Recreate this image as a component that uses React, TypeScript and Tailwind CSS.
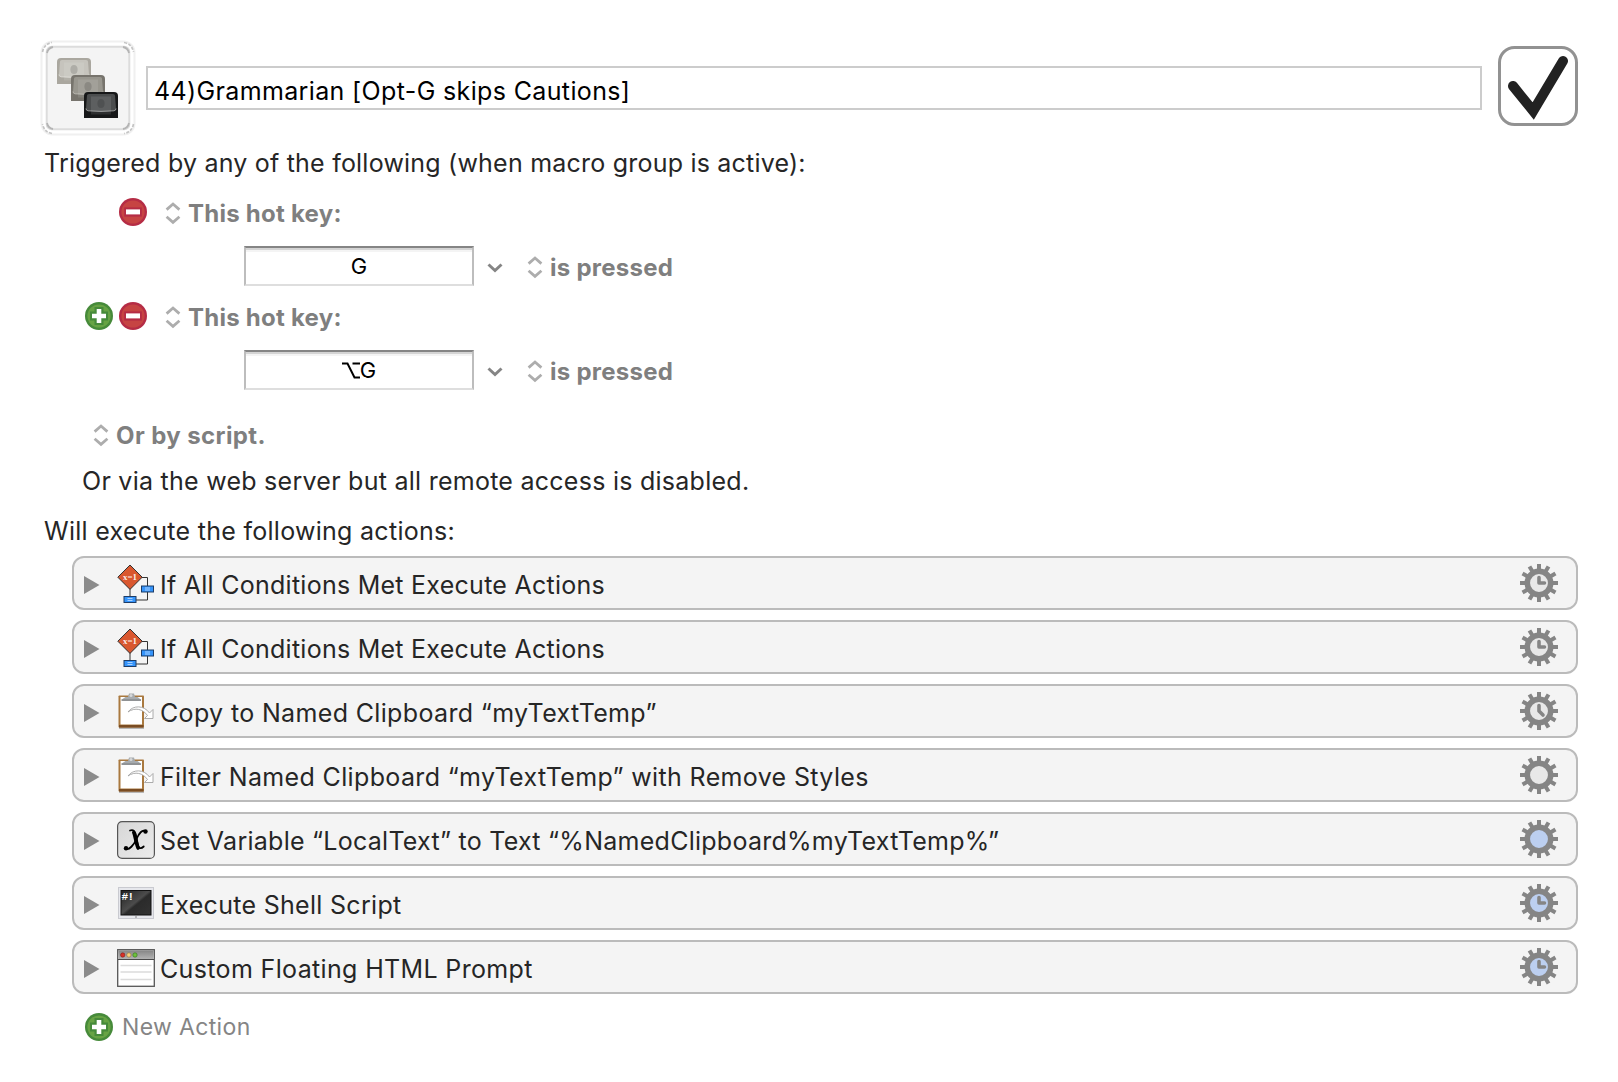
import React from "react";

const teeth = [0, 30, 60, 90, 120, 150, 180, 210, 240, 270, 300, 330];

function Stepper() {
  return (
    <svg width="16" height="24" viewBox="0 0 16 24" className="shrink-0" fill="none" stroke="#adadad" strokeWidth="2.800">
      <path d="M1.600 8.600 8 3l6.400 5.600" />
      <path d="M1.600 15.800 8 21.400l6.400-5.600" />
    </svg>
  );
}

function MinusButton() {
  return (
    <svg width="28" height="28" viewBox="0 0 28 28" className="shrink-0">
      <circle cx="14" cy="14" r="14" fill="#b52c45" />
      <circle cx="14" cy="14" r="11.600" fill="#c64443" />
      <rect x="5.200" y="9.400" width="17.600" height="9.200" fill="#b52c45" />
      <rect x="7" y="11.400" width="14" height="5" fill="#fff" />
    </svg>
  );
}

function PlusButton() {
  return (
    <svg width="28" height="28" viewBox="0 0 28 28" className="shrink-0">
      <circle cx="14" cy="14" r="14" fill="#468a3a" />
      <circle cx="14" cy="14" r="11.600" fill="#67a344" />
      <path d="M9.500 5h9v4.500h4.500v9h-4.500V23h-9v-4.500H5v-9h4.500z" fill="#468a3a" />
      <path d="M11.700 7h4.600v4.700H21v4.600h-4.700V21h-4.600v-4.700H7v-4.600h4.700z" fill="#fff" />
    </svg>
  );
}

function Gear({ fill, hand }: { fill: string; hand?: string }) {
  return (
    <svg width="38" height="38" viewBox="0 0 38 38" className="shrink-0">
      {teeth.map((a) => (
        <rect key={a} x="17" y="0" width="4" height="7" fill="#858585" transform={`rotate(${a} 19 19)`} />
      ))}
      <circle cx="19" cy="19" r="11.700" fill={fill} stroke="#858585" strokeWidth="5.500" />
      {hand && <path d={hand} fill="none" stroke="#858585" strokeWidth="3.600" strokeLinejoin="round" strokeLinecap="round" />}
    </svg>
  );
}

function ConditionIcon() {
  return (
    <svg width="38" height="40" viewBox="0 0 38 40">
      <path d="M13 24v9M24 13.500h6.500V36H18" fill="none" stroke="#333" strokeWidth="1" />
      <path d="M13 1 25.200 13.200 13 25.400.8 13.200z" fill="#d9572f" stroke="#333" strokeWidth="1" />
      <text x="13" y="16" textAnchor="middle" fontSize="9" fontWeight="700" fill="#fff" fillOpacity=".9" fontFamily="Liberation Serif, serif" textLength="14" lengthAdjust="spacingAndGlyphs">x=1</text>
      <rect x="24.500" y="22" width="12" height="6" fill="#3594fb" stroke="#1d3c66" />
      <path d="M28 24h5M28 26h5" stroke="#b5d8ff" strokeWidth=".9" />
      <rect x="7" y="32.500" width="12" height="6" fill="#3594fb" stroke="#1d3c66" />
      <path d="M10.500 34.500h5M10.500 36.500h5" stroke="#b5d8ff" strokeWidth=".9" />
    </svg>
  );
}

function ClipboardIcon() {
  return (
    <svg width="38" height="40" viewBox="0 0 38 40">
      <rect x="2" y="34.500" width="25" height="2.500" fill="#000" opacity=".25" />
      <rect x="1.500" y="3.500" width="25.500" height="32" rx=".8" fill="#a9793f" />
      <rect x="2" y="33" width="24.500" height="2.500" fill="#7a4c22" />
      <rect x="3.500" y="5" width="21.500" height="27.500" fill="#fff" />
      <path d="M4 8 8.500 5H11l1-3.500h5L18 5h2.500L24.500 8z" fill="#a7abae" />
      <circle cx="14" cy="3.500" r="1.500" fill="#d6d8da" />
      <path d="M4.500 8.200h19.500" stroke="#5f6265" strokeWidth="1" />
      <path d="M11 20c5-7 16-7 21.500 1l3.500-3.500V26.500h-8.500l3-3C26 17 18 15 11 20z" fill="#fff" stroke="#a3a3a3" strokeWidth=".9" strokeLinejoin="round" />
    </svg>
  );
}

function VariableIcon() {
  return (
    <svg width="38" height="40" viewBox="0 0 38 40">
      <defs>
        <linearGradient id="variable-key" x1="0" y1="0" x2="1" y2="1">
          <stop offset="0" stopColor="#d6d6d6" />
          <stop offset="1" stopColor="#ececec" />
        </linearGradient>
      </defs>
      <rect x=".6" y="1.600" width="36.800" height="36.800" rx="4.500" fill="url(#variable-key)" stroke="#555" strokeWidth="1.200" />
      <g fill="none" stroke="#000" strokeLinecap="round">
        <path d="M13 10.500c3.500-1.500 5.300 1 6.200 6l1.500 7.500c.8 4.500 3 5.500 6 2.500" strokeWidth="1.800" />
        <path d="M16.800 12.500c1.200 2 2.500 12 4.300 15.500" strokeWidth="3.600" />
        <path d="M29 11.500c-4-2.500-7 2-9.500 7.500S12 31 8.500 28.500" strokeWidth="1.800" />
      </g>
      <circle cx="28.500" cy="11.500" r="2.200" />
      <circle cx="9" cy="28.300" r="2.200" />
    </svg>
  );
}

function ShellIcon() {
  return (
    <svg width="38" height="40" viewBox="0 0 38 40">
      <defs>
        <linearGradient id="shell-screen" x1="0" y1="0" x2="1" y2="1">
          <stop offset="0" stopColor="#222" />
          <stop offset=".48" stopColor="#4c4c4c" />
          <stop offset=".55" stopColor="#2b2b2b" />
          <stop offset="1" stopColor="#333" />
        </linearGradient>
      </defs>
      <rect x="1.500" y="3.500" width="35" height="31" fill="#e6e7ec" stroke="#c9cad0" />
      <rect x="4" y="6.500" width="30" height="24.500" fill="url(#shell-screen)" stroke="#111" />
      <text x="4.500" y="15.500" fontSize="11" fontWeight="700" fill="#fff" fontFamily="Liberation Mono, monospace" textLength="12.500">#!</text>
      <circle cx="19" cy="33" r=".8" fill="#777" />
    </svg>
  );
}

function WindowIcon() {
  return (
    <svg width="38" height="40" viewBox="0 0 38 40">
      <defs>
        <linearGradient id="window-bar" x1="0" y1="0" x2="0" y2="1">
          <stop offset="0" stopColor="#858585" />
          <stop offset="1" stopColor="#b4b4b4" />
        </linearGradient>
      </defs>
      <rect x=".7" y="1.700" width="36.600" height="36.600" fill="#fff" stroke="#555" strokeWidth="1.300" />
      <rect x="1.300" y="2.300" width="35.400" height="9" fill="url(#window-bar)" />
      <path d="M1 11.500h36" stroke="#4a4a4a" />
      <path d="M3.500 17.500h31M3.500 24h31M3.500 31.500h31" stroke="#dcdcdc" strokeWidth="1.500" />
      <circle cx="5.700" cy="7" r="2.200" fill="#d92f26" stroke="#7d201b" strokeWidth=".6" />
      <circle cx="11.900" cy="7" r="2.200" fill="#f7cf7c" stroke="#8b703b" strokeWidth=".6" />
      <circle cx="18" cy="7" r="2.200" fill="#6cc03c" stroke="#38701c" strokeWidth=".6" />
    </svg>
  );
}

function Keycap({ x, y, side, face, lip }: { x: number; y: number; side: string; face: string; lip: string }) {
  return (
    <g transform={`translate(${x} ${y})`}>
      <path d="M0 25.500V4Q0 0 4 0h26q4 0 4 4v21.500q0 .5-.5.500H.5q-.5 0-.5-.5z" fill={side} />
      <path d="M3 3.500Q3 2 5 2h24q2 0 2 1.500l1 13q0 2-2 2.300-13 1.200-26 0-2-.3-2-2.300z" fill={face} />
      <path d="M2 16.500q0 2 2 2.300 13 1.200 26 0 2-.3 2-2.300" fill="none" stroke={lip} strokeWidth=".9" />
      <path d="M7 4.500h20v18H7z" fill="#fff" opacity=".1" />
      <ellipse cx="17" cy="11.500" rx="3.600" ry="4.500" fill="#000" opacity=".14" />
    </g>
  );
}

function MacroIcon() {
  return (
    <svg width="96" height="96" viewBox="0 0 96 96" className="shrink-0">
      <rect x="1.500" y="1.500" width="93" height="93" rx="11" fill="#fff" stroke="#f0f0f0" strokeWidth="2" />
      <path d="M2.500 12Q4 4 12 2.500M84 2.500q8 1.500 9.500 9.500M93.500 84q-1.500 8-9.500 9.500M12 93.500Q4 92 2.500 84" fill="none" stroke="#c4c4c4" strokeWidth="1.700" strokeDasharray="3 1.500" />
      <rect x="6.700" y="6.700" width="82.600" height="82.600" rx="5" fill="#f4f4f4" stroke="#dcdcdc" strokeWidth="2" />
      <path d="M7 13q1-5 6-6M83 7q5 1 6 6M89 83q-1 5-6 6M13 89q-5-1-6-6" fill="none" stroke="#b4b4b4" strokeWidth="1.800" />
      <Keycap x={17} y={18} side="#aaa79f" face="#c6c4bd" lip="#dddbd5" />
      <Keycap x={31} y={35} side="#77746d" face="#98968e" lip="#bbb9b2" />
      <Keycap x={44} y={52} side="#171819" face="#4b4d4e" lip="#a0a1a1" />
    </svg>
  );
}

function HotKey({ value, tail, plus }: { value: React.ReactNode; tail: string; plus?: boolean }) {
  return (
    <div className="h-[104px]">
      <div className="flex h-8 items-center pl-[85px]">
        <div className="w-7">{plus && <PlusButton />}</div>
        <div className="ml-1.5">
          <MinusButton />
        </div>
        <div className="mt-0.5 ml-[18px] flex items-center">
          <Stepper />
          <span className="mt-0.5 ml-[7px] text-[24px] leading-8 font-bold tracking-[0.25px] text-[#7f7f7f]">This hot key:</span>
        </div>
      </div>
      <div className="mt-[18px] ml-[244px] flex h-10 items-center">
        <div className="flex h-10 w-[230px] items-center justify-center border-2 border-t-[#858585] border-r-[#bdbdbd] border-b-[#dedede] border-l-[#bdbdbd] bg-white text-[22px] text-black shadow-[inset_0_2px_0_#d4d4d4,inset_0_4px_0_#f4f4f4]">
          {value}
        </div>
        <svg width="16" height="12" viewBox="0 0 16 12" className="mt-1 ml-[13px] shrink-0" fill="none" stroke="#858585" strokeWidth="3">
          <path d="M1.500 2.500 8 8.500l6.500-6" />
        </svg>
        <div className="mt-0.5 ml-6 flex items-center">
          <Stepper />
          <span className="mt-0.5 ml-[7px] text-[24px] leading-8 font-bold tracking-[0.25px] text-[#7f7f7f]">{tail}</span>
        </div>
      </div>
    </div>
  );
}

const QUARTER = "M19 13.500v5.500h5.500";
const FIVE = "M19 13.500v5.500l4 4";
const GRAY = "#e8e8e8";
const BLUE = "#bccff0";

const actions = [
  { icon: <ConditionIcon />, label: "If All Conditions Met Execute Actions", fill: GRAY, hand: QUARTER, tracking: "tracking-[0.26px]" },
  { icon: <ConditionIcon />, label: "If All Conditions Met Execute Actions", fill: GRAY, hand: QUARTER, tracking: "tracking-[0.26px]" },
  { icon: <ClipboardIcon />, label: "Copy to Named Clipboard “myTextTemp”", fill: GRAY, hand: FIVE, tracking: "tracking-[0.35px]" },
  { icon: <ClipboardIcon />, label: "Filter Named Clipboard “myTextTemp” with Remove Styles", fill: GRAY, tracking: "tracking-[0.36px]" },
  { icon: <VariableIcon />, label: "Set Variable “LocalText” to Text “%NamedClipboard%myTextTemp%”", fill: BLUE, tracking: "tracking-[0.26px]" },
  { icon: <ShellIcon />, label: "Execute Shell Script", fill: BLUE, hand: QUARTER, tracking: "tracking-[0.3px]" },
  { icon: <WindowIcon />, label: "Custom Floating HTML Prompt", fill: BLUE, hand: QUARTER, tracking: "tracking-[0.35px]" },
];

export default function App() {
  return (
    <div className="h-[1082px] w-[1618px] overflow-hidden bg-white pt-10 font-['Inter','DejaVu_Sans',sans-serif] text-[25px] leading-8 whitespace-nowrap text-[#262626]">
      <header className="flex h-24 items-start pl-10">
        <MacroIcon />
        <div className="mt-[26px] ml-[10px] flex h-11 w-[1336px] items-center border-2 border-[#cccccc] pt-1.5 pl-1.5 text-black">
          <span className="tracking-[0.36px]">44)Grammarian [Opt-G skips Cautions]</span>
        </div>
        <svg width="80" height="80" viewBox="0 0 80 80" className="mt-1.5 ml-4">
          <rect x="1.500" y="1.500" width="77" height="77" rx="15" fill="#fff" stroke="#929292" strokeWidth="3" />
          <path d="M15 40 35.200 65 65 15" fill="none" stroke="#222" strokeWidth="10" strokeLinecap="round" />
        </svg>
      </header>

      <p className="mt-[11px] pl-11 tracking-[0.215px]">Triggered by any of the following (when macro group is active):</p>

      <section className="mt-[17px]">
        <HotKey value="G" tail="is pressed" />
        <HotKey
          plus
          value={
            <>
              <svg width="18" height="17" viewBox="0 0 18 17" fill="none" stroke="#000" strokeWidth="2">
                <path d="M0 1.500h5.500L12.500 15.500H18M10.500 1.500H18" />
              </svg>
              G
            </>
          }
          tail="is pressed"
        />
      </section>

      <div className="mt-[15px] flex h-8 items-center pl-[93px]">
        <Stepper />
        <span className="mt-0.5 ml-[7px] text-[24px] font-bold tracking-[0.4px] text-[#7f7f7f]">Or by script.</span>
      </div>
      <p className="mt-[14px] pl-[82px] tracking-[0.26px]">Or via the web server but all remote access is disabled.</p>
      <p className="mt-[18px] pl-11 tracking-[0.28px]">Will execute the following actions:</p>

      <ul className="mt-[9px] ml-[72px] flex w-[1506px] flex-col gap-[10px]">
        {actions.map((a, i) => (
          <li key={i} className="flex h-[54px] items-center rounded-xl border-2 border-[#bbbbbb] bg-[#f4f4f4] pr-[18px] pl-[10px]">
            <svg width="16" height="18" viewBox="0 0 16 18" className="mt-[3px] shrink-0">
              <path d="M0 0 15.500 9 0 18z" fill="#8b8b8b" />
            </svg>
            <div className="mt-0.5 ml-[17px] w-[38px] shrink-0">{a.icon}</div>
            <span className={`mt-1 ml-[5px] flex-1 ${a.tracking}`}>{a.label}</span>
            <Gear fill={a.fill} hand={a.hand} />
          </li>
        ))}
      </ul>

      <div className="mt-[17px] flex items-center pl-[85px]">
        <PlusButton />
        <span className="ml-[9px] text-[23px] tracking-[0.35px] text-[#858585]">New Action</span>
      </div>
    </div>
  );
}
